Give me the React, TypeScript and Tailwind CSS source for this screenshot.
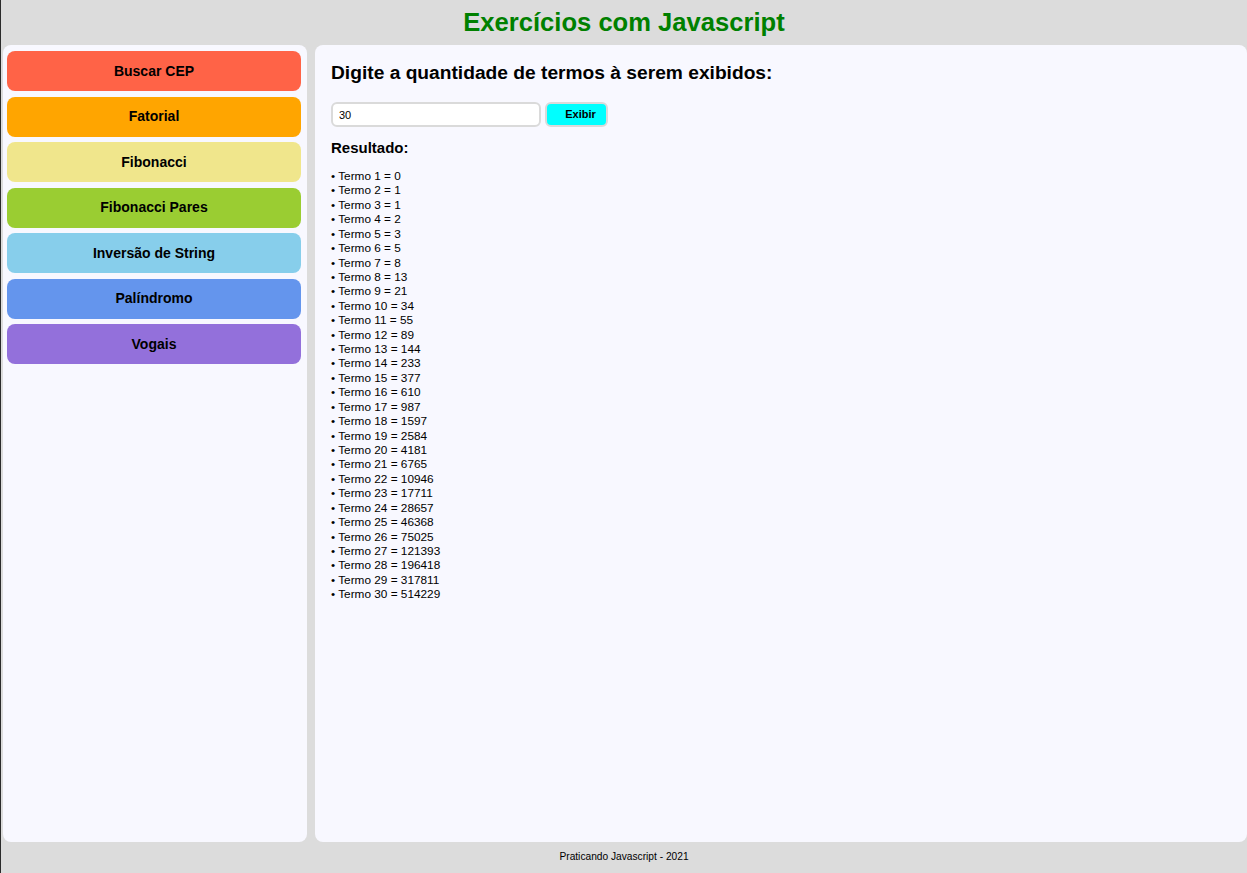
import React from 'react';

const botoes = [
  { nome: 'Buscar CEP', cor: 'bg-[#ff6347]' },
  { nome: 'Fatorial', cor: 'bg-[#ffa500]' },
  { nome: 'Fibonacci', cor: 'bg-[#f0e68c]' },
  { nome: 'Fibonacci Pares', cor: 'bg-[#9acd32]' },
  { nome: 'Inversão de String', cor: 'bg-[#87ceeb]' },
  { nome: 'Palíndromo', cor: 'bg-[#6495ed]' },
  { nome: 'Vogais', cor: 'bg-[#9370db]' },
];

function fibonacci(n: number): number[] {
  const termos: number[] = [];
  let a = 0;
  let b = 1;
  for (let i = 0; i < n; i++) {
    termos.push(a);
    [a, b] = [b, a + b];
  }
  return termos;
}

const App: React.FC = () => {
  const termos = fibonacci(30);

  return (
    <div className="min-h-screen flex flex-col bg-[#dcdcdc] border-l-[1px] border-[#2b2b2b] font-['Liberation_Sans',Arial,sans-serif] text-black">
      <header className="h-[45px] flex items-center justify-center">
        <h1 className="text-[25.6px] font-bold text-[#008000] leading-none">Exercícios com Javascript</h1>
      </header>

      <main className="flex-1 flex gap-2 pl-[2px]">
        <aside className="w-[304px] bg-[#f8f8ff] rounded-lg pl-1 pr-[6px] pt-[6px] flex flex-col gap-[5.5px]">
          {botoes.map((b) => (
            <button
              key={b.nome}
              className={`${b.cor} h-10 rounded-lg text-[14px] font-bold text-black`}
            >
              {b.nome}
            </button>
          ))}
        </aside>

        <section className="flex-1 bg-[#f8f8ff] rounded-lg px-4 pt-[17px]">
          <h3 className="text-[19.2px] font-bold leading-[22px]">
            Digite a quantidade de termos à serem exibidos:
          </h3>

          <div className="flex items-center gap-1 mt-[18px]">
            <input
              type="text"
              defaultValue="30"
              className="w-[210px] h-[25px] bg-white border-2 border-[#dadada] rounded-md px-[6px] text-[11px] outline-none"
            />
            <button className="w-[63px] h-[25px] bg-[#00ffff] border-2 border-[#dadada] rounded-md pl-2 text-[11px] font-bold">
              Exibir
            </button>
          </div>

          <h4 className="text-[15px] font-bold mt-[12px] leading-[18px]">Resultado:</h4>

          <ul className="mt-[12px] text-[11.8px] leading-[14.42px]">
            {termos.map((t, i) => (
              <li key={i}>• Termo {i + 1} = {t}</li>
            ))}
          </ul>
        </section>
      </main>

      <footer className="h-[31px] flex items-center justify-center text-[10.2px] pb-[2px]">
        Praticando Javascript - 2021
      </footer>
    </div>
  );
};

export default App;
